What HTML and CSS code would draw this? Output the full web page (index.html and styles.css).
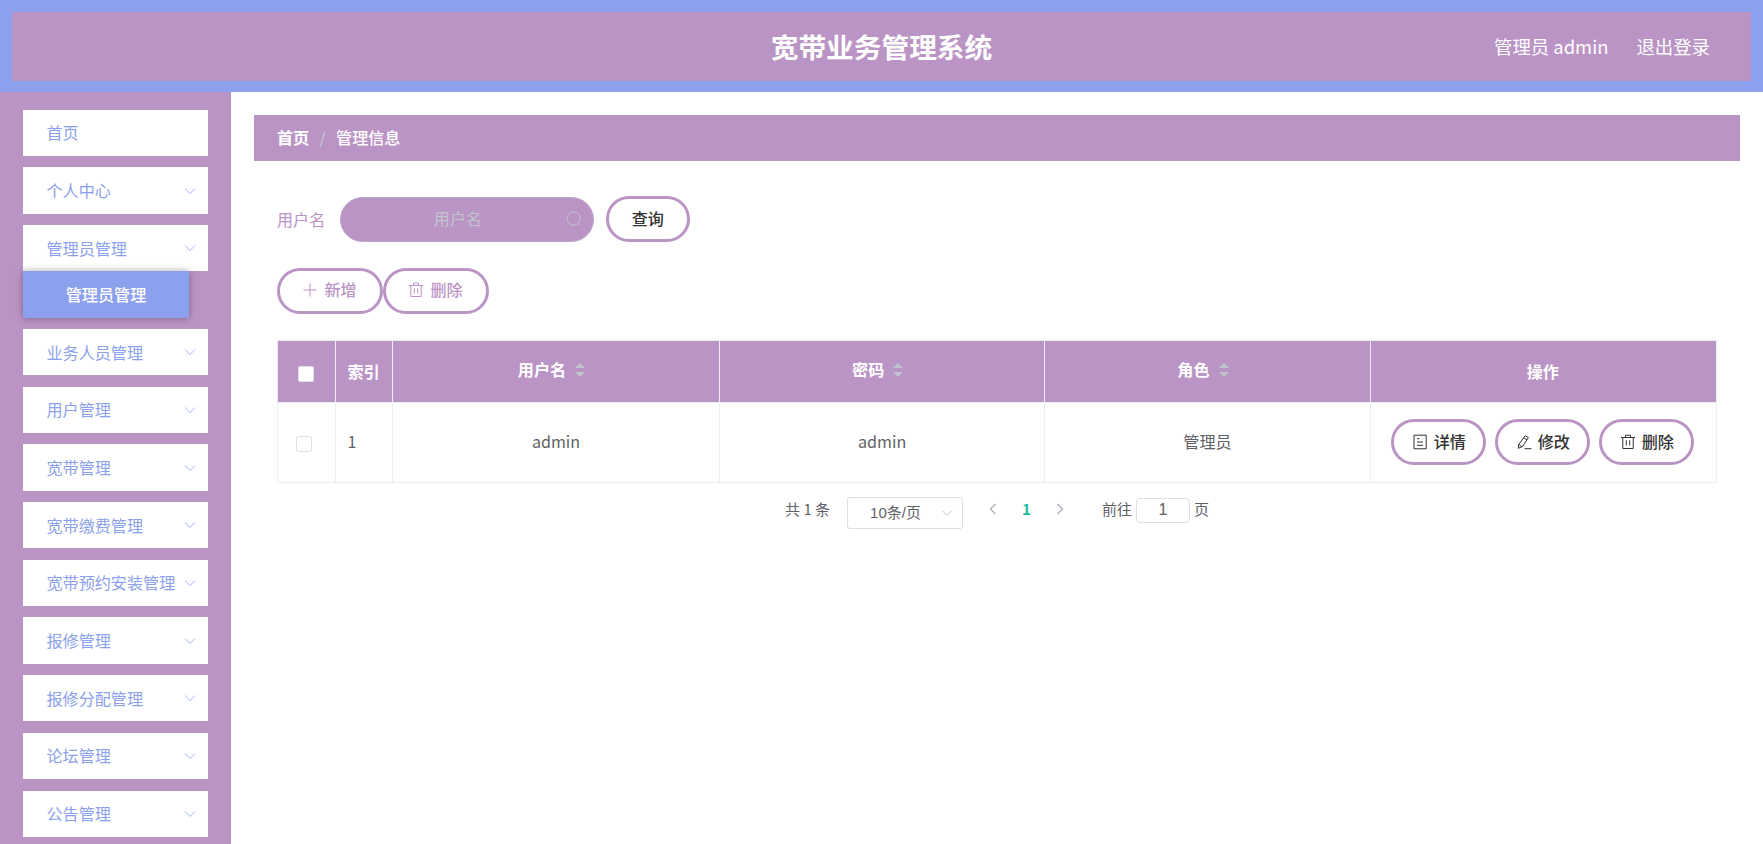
FILE: index.html
```html
<!DOCTYPE html>
<html lang="zh">
<head>
    <meta charset="UTF-8">
    <meta name="viewport" content="width=device-width, initial-scale=1.0">
    <title>宽带业务管理系统</title>
    <link rel="stylesheet" href="styles.css">
</head>
<body>
    <svg class="icon-defs">
        <symbol id="arrow-down" viewBox="0 0 16 16"><path d="M3 5.5l5 5 5-5"/></symbol>
        <symbol id="arrow-left" viewBox="0 0 16 16"><path d="M10.5 3l-5 5 5 5"/></symbol>
        <symbol id="arrow-right" viewBox="0 0 16 16"><path d="M5.5 3l5 5-5 5"/></symbol>
        <symbol id="plus" viewBox="0 0 16 16"><path d="M8 1.5v13M1.5 8h13"/></symbol>
        <symbol id="delete" viewBox="0 0 16 16"><path d="M1 3.5h14M2.8 3.5v11h10.4v-11M5.5 3.3V1.2h5v2.1M6.3 6.3v5.2M9.7 6.3v5.2"/></symbol>
        <symbol id="search" viewBox="0 0 16 16"><circle cx="7.7" cy="7.5" r="6.6"/><path d="M12.5 12.3l2.3 2.4"/></symbol>
        <symbol id="document" viewBox="0 0 16 16"><path d="M2 1.2h12.2v13.6H2zM5 4.7h2.5M5 8h6M5 11.3h6"/></symbol>
        <symbol id="edit" viewBox="0 0 16 16"><path d="M9.3 1.7l3.1 2-6.2 9-3.9 1.6.4-3.8zM7.9 3.8l3.1 2M2.7 10.5l3.2 2.1M8.5 14.7h7"/></symbol>
    </svg>

    <div class="header">
        <div class="header-inner">
            <div class="title">宽带业务管理系统</div>
            <div class="user-info">
                <span>管理员 admin</span>
                <span>退出登录</span>
            </div>
        </div>
    </div>

    <div class="container">
        <div class="sidebar">
            <div class="menu-item">首页</div>
            <div class="menu-item">个人中心<svg class="arrow"><use href="#arrow-down"/></svg></div>
            <div class="menu-item open">管理员管理<svg class="arrow"><use href="#arrow-down"/></svg></div>
            <div class="submenu-item">管理员管理</div>
            <div class="menu-item">业务人员管理<svg class="arrow"><use href="#arrow-down"/></svg></div>
            <div class="menu-item">用户管理<svg class="arrow"><use href="#arrow-down"/></svg></div>
            <div class="menu-item">宽带管理<svg class="arrow"><use href="#arrow-down"/></svg></div>
            <div class="menu-item">宽带缴费管理<svg class="arrow"><use href="#arrow-down"/></svg></div>
            <div class="menu-item">宽带预约安装管理<svg class="arrow"><use href="#arrow-down"/></svg></div>
            <div class="menu-item">报修管理<svg class="arrow"><use href="#arrow-down"/></svg></div>
            <div class="menu-item">报修分配管理<svg class="arrow"><use href="#arrow-down"/></svg></div>
            <div class="menu-item">论坛管理<svg class="arrow"><use href="#arrow-down"/></svg></div>
            <div class="menu-item">公告管理<svg class="arrow"><use href="#arrow-down"/></svg></div>
        </div>

        <div class="main">
            <div class="breadcrumb">
                <b>首页</b><span class="separator">/</span><span>管理信息</span>
            </div>
            <div class="content">
                <div class="search-form">
                    <label>用户名</label>
                    <div class="search-input">
                        <input type="text" placeholder="用户名">
                        <svg class="icon"><use href="#search"/></svg>
                    </div>
                    <button class="btn btn-query">查询</button>
                </div>
                <div class="toolbar">
                    <button class="btn btn-light"><svg class="icon"><use href="#plus"/></svg>新增</button>
                    <button class="btn btn-light"><svg class="icon"><use href="#delete"/></svg>删除</button>
                </div>

                <table>
                    <colgroup>
                        <col class="col-check"><col class="col-index"><col class="col-name"><col class="col-data"><col class="col-data"><col>
                    </colgroup>
                    <thead>
                        <tr>
                            <th><span class="checkbox"></span></th>
                            <th>索引</th>
                            <th><div class="sortable">用户名<span class="sort"></span></div></th>
                            <th><div class="sortable">密码<span class="sort"></span></div></th>
                            <th><div class="sortable">角色<span class="sort"></span></div></th>
                            <th>操作</th>
                        </tr>
                    </thead>
                    <tbody>
                        <tr>
                            <td class="check-cell"><span class="checkbox"></span></td>
                            <td class="index-cell">1</td>
                            <td>admin</td>
                            <td>admin</td>
                            <td>管理员</td>
                            <td class="actions-cell">
                                <div class="actions">
                                    <button class="btn"><svg class="icon"><use href="#document"/></svg>详情</button>
                                    <button class="btn"><svg class="icon"><use href="#edit"/></svg>修改</button>
                                    <button class="btn"><svg class="icon"><use href="#delete"/></svg>删除</button>
                                </div>
                            </td>
                        </tr>
                    </tbody>
                </table>

                <div class="pagination">
                    <span>共 1 条</span>
                    <div class="page-size">10条/页<svg class="arrow"><use href="#arrow-down"/></svg></div>
                    <div class="pager">
                        <svg class="arrow"><use href="#arrow-left"/></svg>
                        <b>1</b>
                        <svg class="arrow"><use href="#arrow-right"/></svg>
                    </div>
                    <div class="jump">前往<input type="text" value="1">页</div>
                </div>
            </div>
        </div>
    </div>
</body>
</html>
```
FILE: styles.css
```css
* {
    box-sizing: border-box;
}

body {
    margin: 0;
    height: 844px;
    overflow: hidden;
    background: #fff;
    color: #606266;
    font-family: "Noto Sans CJK SC", sans-serif;
    font-size: 16.1px;
}

.icon-defs {
    display: none;
}

svg {
    fill: none;
    stroke: currentColor;
    stroke-width: 1;
}

.icon,
.arrow {
    width: 16px;
    height: 16px;
    flex: none;
}

.header {
    height: 92px;
    padding: 12px 12px 11.5px;
    background: #8ca1ed;
}

.header-inner {
    position: relative;
    height: 100%;
    display: flex;
    align-items: center;
    justify-content: center;
    background: #bb94c6;
    color: #fff;
}

.title {
    font-size: 27.7px;
    font-weight: bold;
    line-height: 40px;
}

.user-info {
    position: absolute;
    right: 41px;
    display: flex;
    gap: 28px;
    font-size: 18.4px;
}

.container {
    display: flex;
    height: 752px;
}

.sidebar {
    width: 231px;
    flex: none;
    padding: 17.8px 23px 0;
    background: #bb94c6;
    overflow: hidden;
}

.menu-item {
    display: flex;
    align-items: center;
    justify-content: space-between;
    height: 46.2px;
    margin-bottom: 11.5px;
    padding: 0 10.5px 1px 23.5px;
    background: #fff;
    color: #8ca1ed;
    white-space: nowrap;
}

.menu-item .arrow {
    margin-top: 1px;
    opacity: 0.8;
}

.menu-item.open {
    margin-bottom: 0;
}

.submenu-item {
    position: relative;
    width: 166px;
    height: 46.2px;
    margin-bottom: 11.5px;
    background: #8ca1ed;
    color: #fff;
    line-height: 46px;
    text-align: center;
    font-weight: 500;
    box-shadow: 0 0 7px rgba(0, 0, 0, 0.35);
}

.main {
    flex: 1;
    padding: 23.4px 23px 0;
}

.breadcrumb {
    display: flex;
    align-items: center;
    height: 46.1px;
    padding: 0 0 2px 23px;
    background: #bb94c6;
    color: #fff;
    font-weight: 500;
}

.separator {
    margin: 0 10.3px;
    color: #c0c4cc;
}

.content {
    padding: 35px 23px 0;
}

.search-form {
    display: flex;
    align-items: center;
    color: #bb94c6;
}

.search-input {
    position: relative;
    width: 254px;
    height: 45px;
    margin: 0 11.5px 0 15px;
}

.search-input input {
    width: 100%;
    height: 100%;
    padding: 0 36px 3px 17px;
    border: 1px solid #bba4ce;
    border-radius: 23px;
    background: #bb94c6;
    font: inherit;
    text-align: center;
}

.search-input input::placeholder {
    color: #c0c4cc;
}

.search-input .icon {
    position: absolute;
    right: 12px;
    top: 14px;
    color: #c0c4cc;
}

.btn {
    display: flex;
    align-items: center;
    justify-content: center;
    gap: 6px;
    width: 95px;
    height: 46px;
    padding: 0 0 3px;
    border: 3px solid #bb94c6;
    border-radius: 23px;
    background: #fff;
    color: #333;
    font: 500 16.1px "Noto Sans CJK SC", sans-serif;
}

.btn .icon {
    position: relative;
    top: 1px;
}

.btn-query {
    width: 84px;
}

.btn-light {
    width: 106px;
    padding-right: 1px;
    color: #bb94c6;
}

.toolbar {
    display: flex;
    margin: 25.5px 0 26px;
}

table {
    width: 1440px;
    table-layout: fixed;
    border-collapse: collapse;
    text-align: center;
}

.col-check {
    width: 58px;
}

.col-index {
    width: 57px;
}

.col-name {
    width: 327px;
}

.col-data {
    width: 325.3px;
}

th,
td {
    border: 1px solid #ebeef5;
}

th {
    height: 62px;
    padding: 0 1px 1px 0;
    background: #bb94c6;
    color: #fff;
}

td {
    height: 80px;
    padding: 0 0 2px;
}

.sortable {
    display: flex;
    align-items: center;
    justify-content: center;
    padding: 0 8px 3px 0;
}

.checkbox {
    display: inline-block;
    width: 16px;
    height: 16px;
    border: 1px solid #dcdfe6;
    border-radius: 2px;
    background: #fff;
    vertical-align: middle;
}

.check-cell {
    padding-right: 5px;
}

.index-cell {
    padding-left: 11.5px;
    text-align: left;
}

.actions-cell {
    padding: 0 1px 0 0;
}

/* two triangles, up and down */
.sort {
    display: flex;
    flex-direction: column;
    gap: 4px;
    margin-left: 9px;
    padding-top: 1px;
}

.sort::before,
.sort::after {
    content: "";
    border: 5.5px solid transparent;
}

.sort::before {
    border-top: 0;
    border-bottom-color: #c0c4cc;
}

.sort::after {
    border-bottom: 0;
    border-top-color: #c0c4cc;
}

.actions {
    display: flex;
    justify-content: center;
    gap: 9px;
}

.pagination {
    display: flex;
    justify-content: center;
    margin-top: 14px;
    font-size: 15px;
    line-height: 24px;
}

.page-size {
    display: flex;
    align-items: center;
    justify-content: space-between;
    width: 116px;
    height: 32px;
    margin: 0 22px 0 17px;
    padding: 0 7px 0 22px;
    border: 1px solid #dcdfe6;
    border-radius: 3px;
    font-family: "Liberation Sans", "Noto Sans CJK SC", sans-serif;
}

.page-size .arrow {
    color: #c0c4cc;
}

.pager {
    display: flex;
    align-items: center;
    gap: 21px;
    height: 25px;
    color: #b4b8c0;
}

.pager .arrow {
    stroke-width: 1.6;
}

.pager b {
    color: #1abc9c;
}

.jump {
    display: flex;
    margin-left: 34px;
}

.jump input {
    width: 54px;
    height: 25px;
    margin: 1px 4px 0;
    padding: 0;
    border: 1px solid #dcdfe6;
    border-radius: 4px;
    color: #606266;
    font: 16px "Liberation Sans", sans-serif;
    text-align: center;
}
```
